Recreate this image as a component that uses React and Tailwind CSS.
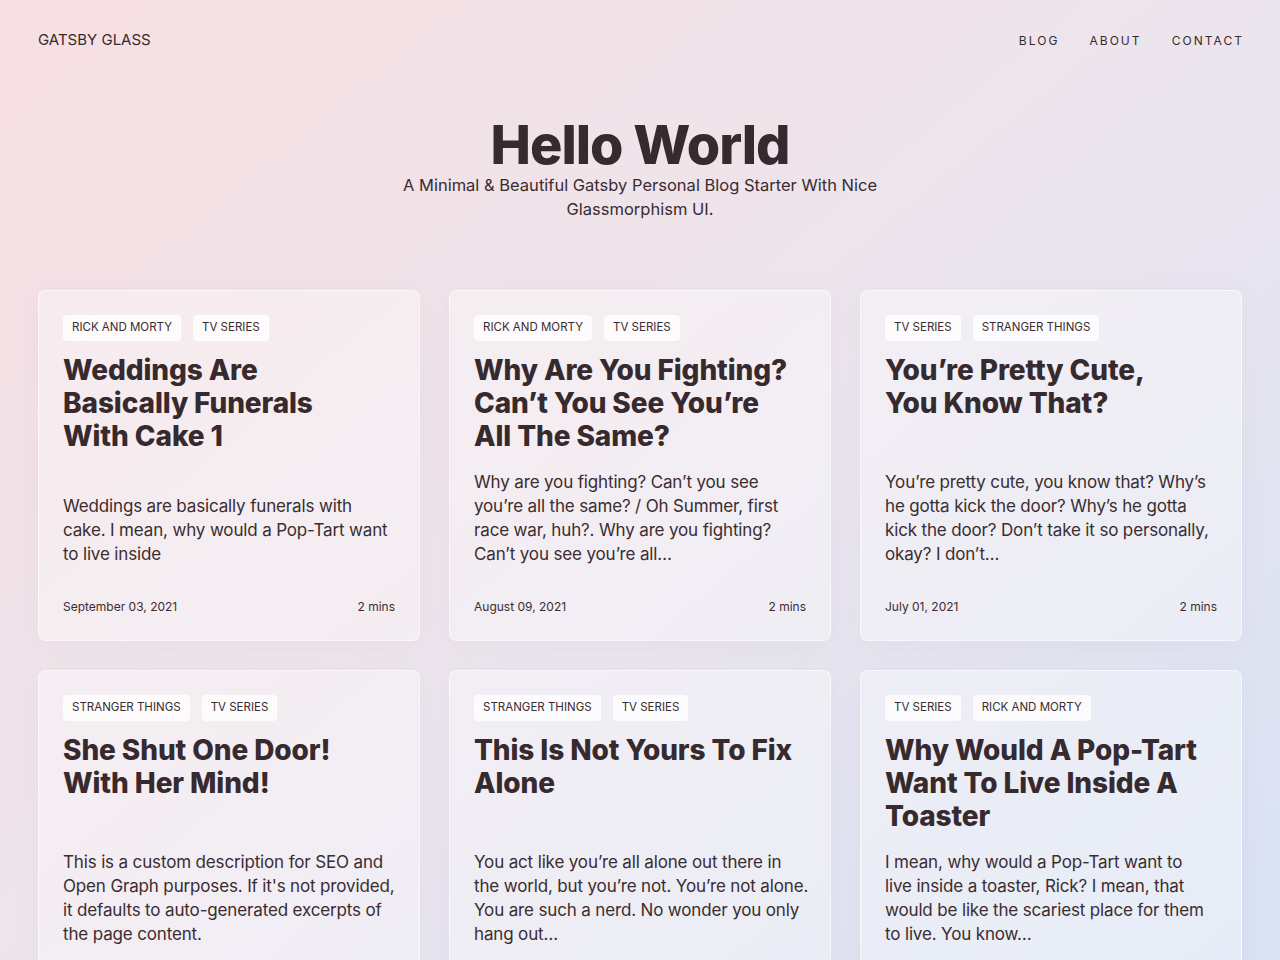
import React from "react";

const posts = [
  {
    tags: ["RICK AND MORTY", "TV SERIES"],
    title: ["Weddings Are", "Basically Funerals", "With Cake 1"],
    excerpt: ["Weddings are basically funerals with", "cake. I mean, why would a Pop-Tart want", "to live inside"],
    date: "September 03, 2021",
  },
  {
    tags: ["RICK AND MORTY", "TV SERIES"],
    title: ["Why Are You Fighting?", "Can’t You See You’re", "All The Same?"],
    excerpt: [
      "Why are you fighting? Can’t you see",
      "you’re all the same? / Oh Summer, first",
      "race war, huh?. Why are you fighting?",
      "Can’t you see you’re all…",
    ],
    date: "August 09, 2021",
  },
  {
    tags: ["TV SERIES", "STRANGER THINGS"],
    title: ["You’re Pretty Cute,", "You Know That?"],
    excerpt: [
      "You’re pretty cute, you know that? Why’s",
      "he gotta kick the door? Why’s he gotta",
      "kick the door? Don’t take it so personally,",
      "okay? I don’t…",
    ],
    date: "July 01, 2021",
  },
  {
    tags: ["STRANGER THINGS", "TV SERIES"],
    title: ["She Shut One Door!", "With Her Mind!"],
    excerpt: [
      "This is a custom description for SEO and",
      "Open Graph purposes. If it's not provided,",
      "it defaults to auto-generated excerpts of",
      "the page content.",
    ],
    date: "June 12, 2021",
  },
  {
    tags: ["STRANGER THINGS", "TV SERIES"],
    title: ["This Is Not Yours To Fix", "Alone"],
    excerpt: [
      "You act like you’re all alone out there in",
      "the world, but you’re not. You’re not alone.",
      "You are such a nerd. No wonder you only",
      "hang out…",
    ],
    date: "May 20, 2021",
  },
  {
    tags: ["TV SERIES", "RICK AND MORTY"],
    title: ["Why Would A Pop-Tart", "Want To Live Inside A", "Toaster"],
    excerpt: [
      "I mean, why would a Pop-Tart want to",
      "live inside a toaster, Rick? I mean, that",
      "would be like the scariest place for them",
      "to live. You know…",
    ],
    date: "April 15, 2021",
  },
];

function Card({ post }) {
  return (
    <article className="flex flex-col rounded-lg border border-white/60 bg-white/35 p-6 shadow-[0_4px_24px_rgba(120,90,110,0.05)]">
      <div className="mb-[13px] flex gap-3">
        {post.tags.map((t) => (
          <span
            key={t}
            className="flex h-[26px] items-center rounded bg-white/80 px-[9px] text-[11.5px] leading-none text-[#3a2c30]"
          >
            {t}
          </span>
        ))}
      </div>
      <h2 className="text-[28px] font-extrabold leading-[33px] tracking-[-0.1px] text-[#372a2e]">
        {post.title.map((l, i) => (
          <span key={i} className="block whitespace-nowrap">
            {l}
          </span>
        ))}
      </h2>
      <p className="mt-auto pt-[17px] text-[17px] leading-6 tracking-[-0.15px] text-[#3a2c30]">
        {post.excerpt.map((l, i) => (
          <span key={i} className="block whitespace-nowrap">
            {l}
          </span>
        ))}
      </p>
      <div className="mt-8 flex items-center justify-between text-[12px] leading-[18px] text-[#3a2c30]">
        <span>{post.date}</span>
        <span>2 mins</span>
      </div>
    </article>
  );
}

export default function App() {
  return (
    <div
      className="min-h-[960px] bg-gradient-to-br from-[#f7dfe2] via-[#ece5ee] to-[#d6e2f4] px-[38px] text-[#372a2e]"
      style={{ fontFamily: "Inter, 'Noto Sans', sans-serif" }}
    >
      <header className="flex h-20 items-center justify-between">
        <div className="text-[15px] leading-6 text-[#372a2e]">GATSBY GLASS</div>
        <nav className="flex gap-[30px] pt-px text-[12px] leading-6 tracking-[0.17em] text-[#372a2e]">
          <a>BLOG</a>
          <a>ABOUT</a>
          <a className="-mr-[2px]">CONTACT</a>
        </nav>
      </header>
      <section className="flex flex-col items-center pt-[37px] text-center">
        <h1 className="text-[54px] font-extrabold leading-[56px] tracking-[-1px] text-[#372a2e]">
          Hello World
        </h1>
        <p className="max-w-[500px] text-[16.5px] leading-6 text-[#3a2c30]">
          A Minimal &amp; Beautiful Gatsby Personal Blog Starter With Nice Glassmorphism UI.
        </p>
      </section>
      <main className="mt-[69px] grid grid-cols-3 gap-[29px] pb-10">
        {posts.map((p) => (
          <Card key={p.date} post={p} />
        ))}
      </main>
    </div>
  );
}
